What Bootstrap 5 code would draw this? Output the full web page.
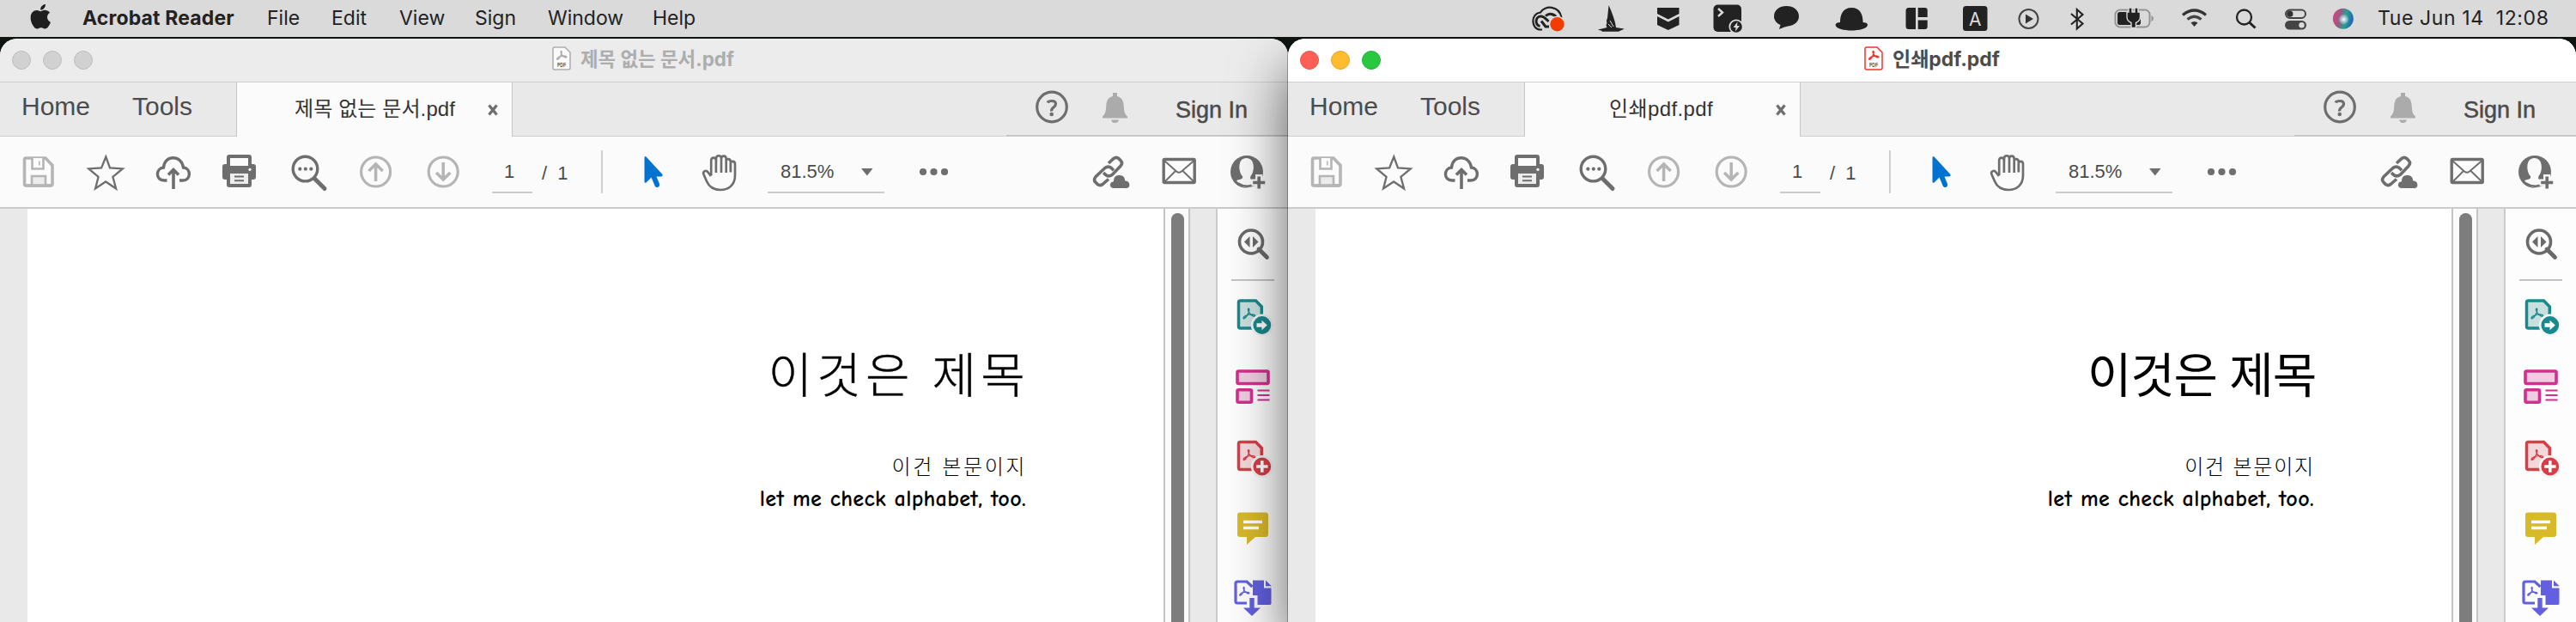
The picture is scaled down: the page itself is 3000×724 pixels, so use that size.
<!DOCTYPE html>
<html lang="ko">
<head>
<meta charset="utf-8">
<title>Acrobat Reader</title>
<meta name="viewport" content="width=device-width, initial-scale=1">
<link href="https://cdn.jsdelivr.net/npm/bootstrap@5.3.0/dist/css/bootstrap.min.css" rel="stylesheet">
<style>
  body { width: 3000px; height: 724px; overflow: hidden; background: #101512; font-family: "Liberation Sans", "Noto Sans CJK KR", sans-serif; color: #4b4b4b; }
  svg { display: block; flex: none; }
  .nowrap > *, .t { white-space: nowrap; flex: none; }
  .ui { font-family: Inter, "Noto Sans CJK KR", sans-serif; }

  /* menu bar */
  .menubar { height: 43px; background: #dadada; color: #222; font-size: 23px; line-height: 42px; position: relative; z-index: 3; }
  .menubar .app { width: 215px; font-weight: 700; letter-spacing: .15px; }
  .m-file { width: 75px; } .m-edit { width: 79px; } .m-view { width: 88px; } .m-sign { width: 85px; } .m-window { width: 122px; }
  .clock { width: 231px; white-space: pre; letter-spacing: .6px; }
  .menubar svg { height: 43px; }

  /* windows */
  .desk { padding-top: 2px; height: 681px; }
  .win { width: 1500px; height: 679px; border-radius: 20px 20px 0 0; overflow: hidden; background: #fff; flex: none; }
  .front { position: relative; z-index: 2; box-shadow: 0 0 0 1px rgba(0,0,0,.28), 0 34px 66px rgba(0,0,0,.62); }
  .titlebar { height: 51px; background: #ececec; border-bottom: 1.5px solid #cfcfcf; color: #adadad; font-size: 22.4px; font-weight: 700; line-height: 48px; }
  .front .titlebar { background: #fff; color: #4c4c4c; font-size: 23px; }
  .titlebar span { position: relative; top: -1px; }
  .lights { width: 643px; padding-left: 14px; gap: 14px; }
  .front .lights { width: 671px; }
  .light { width: 22px; height: 22px; border-radius: 50%; background: #d1d1d1; border: 1px solid #bebebe; }
  .front .l-red { background: #ff5f57; border-color: #e9534c; }
  .front .l-yellow { background: #febc2e; border-color: #e5a72a; }
  .front .l-green { background: #28c840; border-color: #22b238; }
  .pdficon { width: 22px; height: 28px; margin-right: 11px; margin-top: -4px; color: #adadad; }
  .front .pdficon { color: #f2332d; }

  .tabs { height: 63px; background: #e9e9e9; }
  .tabs > .cell { border-bottom: 1.5px solid #cfcfcf; }
  .nav-left { width: 275px; padding-left: 25px; font-size: 30px; line-height: 55px; }
  .nav-home { width: 129px; }
  .doc-tab { width: 322px; background: #fbfbfb; border: solid #c8c8c8; border-width: 0 1px; color: #333; font-size: 24px; line-height: 61px; padding-left: 67px; }
  .front .doc-tab { padding-left: 98px; }
  .doc-tab .name { width: 224px; letter-spacing: .1px; }
  .front .doc-tab .name { width: 193px; letter-spacing: .4px; }
  .nav-right { width: 328px; }
  .tabs > .nav-right { border-bottom: 2px solid #c6c6c6; }
  .signin { font-size: 27px; line-height: 65px; padding-left: 1px; -webkit-text-stroke: .5px; }

  .tools { height: 84px; background: #fbfbfb; border-bottom: 2px solid #cbcbcb; font-size: 22px; line-height: 83px; }
  .tools svg { height: 82px; }
  .pageno { width: 47px; height: 66px; border-bottom: 2px solid #cbcbcb; text-align: center; padding-right: 7px; line-height: 82px; }
  .pagecount { width: 80px; padding-left: 11px; word-spacing: 6px; line-height: 85px; }
  .zoom { width: 136px; height: 66px; border-bottom: 2px solid #cbcbcb; padding-left: 15px; line-height: 82px; }

  /* document */
  .docview { height: 481px; }
  .gutter { width: 32px; background: #e9e9e9; }
  .paper { width: 1323px; background: #fff; color: #000; padding-right: 160px; }
  .track { width: 31px; background: #fbfbfb; border: solid #c3c3c3; border-width: 0 2px; padding: 5px 0 0 7px; }
  .thumb { width: 15px; height: 490px; border-radius: 8px; background: #7d7d7d; }
  .side-gap { width: 32px; background: #e9e9e9; border-right: 2px solid #cbcbcb; }
  .rail { width: 82px; background: #fdfdfd; }
  .doc-title { font: 300 56px/60px "Noto Sans CJK KR", sans-serif; margin: 160px -4px 0 0; letter-spacing: 5.2px; -webkit-text-stroke: .4px; }
  .front .doc-title { font-weight: 400; letter-spacing: -1.2px; margin-right: -2px; -webkit-text-stroke: 0; }
  .doc-body { font: 300 24px/30px "Noto Sans CJK KR", sans-serif; margin-top: 64px; margin-right: -1px; letter-spacing: 2.6px; }
  .front .doc-body { letter-spacing: 1.8px; }
  .doc-en { font: 700 26px/30px "Comic Neue", "Comic Sans MS", "Noto Sans", sans-serif; margin-top: 9px; letter-spacing: .35px; }
</style>
</head>
<body>

<svg width="0" height="0" class="position-absolute" aria-hidden="true">
  <defs>
    <path id="acro" d="M3 17c-2-1 1-4 5-5 3-.8 7-1 9 0 2 1 0 2.500-2 1.500-3-1.500-6-5-6.500-8.500-.3-2 1.600-2 1.500 0C9.800 9 6.500 16 3 17z" fill="none" stroke="currentColor"/>

    <symbol id="i-pdf" viewBox="0 0 22 28">
      <path d="M3 1h12l6 6v18q0 2-2 2H3q-2 0-2-2V3q0-2 2-2z" fill="#fff" fill-opacity=".75" stroke="currentColor" stroke-width="1.500"/>
      <use href="#acro" transform="translate(4 3) scale(.72)" stroke-width="2"/>
      <text x="6" y="24" font-size="6.500" font-weight="700" textLength="10" lengthAdjust="spacingAndGlyphs" fill="#555" font-family="Liberation Sans">PDF</text>
    </symbol>

    <symbol id="i-help" viewBox="1173 96 90 61">
      <circle cx="1226" cy="124.500" r="17.300" fill="none" stroke="#6e6e6e" stroke-width="3.200"/>
      <path d="M1221 119.500q1-2 5-2 4.500 0 4.500 3.600 0 2-2.600 4t-2.300 4.400" fill="none" stroke="#6e6e6e" stroke-width="3.200"/>
      <circle cx="1225.700" cy="133" r="2.300" fill="#6e6e6e"/>
    </symbol>
    <symbol id="i-bell" viewBox="1263 96 106 61">
      <path d="M1297 108h5v4c6 1.500 7.500 6 7.800 12 .3 6 1.200 9 4.200 11.500v2h-29v-2c3-2.500 3.900-5.500 4.200-11.500.3-6 1.800-10.500 7.800-12zM1295 139.500h9q-1 3.500-4.500 3.500t-4.500-3.500z" fill="#ababab"/>
    </symbol>

    <symbol id="i-save" viewBox="0 159 84 82">
      <path d="M30 184h23l8 8.500V214q0 2-2 2H30q-1.500 0-1.500-2v-28q0-2 1.500-2z" fill="none" stroke="#b5b5b5" stroke-width="3.600"/>
      <path d="M37.500 184v12.500h13V184M37 217v-12h16v12" fill="#ececec" stroke="#b5b5b5" stroke-width="2.600"/><path d="M39 184h10v11H39z" fill="#fbfbfb"/><path d="M45.800 187.500v5" stroke="#b5b5b5" stroke-width="1.600"/>
      <path d="M30 216h30" stroke="#b5b5b5" stroke-width="3.400"/>
    </symbol>
    <symbol id="i-star" viewBox="84 159 80 82">
      <path d="M123.300 182.500l4.700 13 14.800.9-11.400 9.400 3.700 13.700-12-8-12 8 3.500-13.700-11.300-9.400 14.800-.9z" fill="none" stroke="#6e6e6e" stroke-width="2.300"/>
    </symbol>
    <symbol id="i-cloud" viewBox="164 159 78 82">
      <path d="M194.500 210h-3.500c-10 0-10-14-.5-15 1-15 21-15 23 0 9.500 1 9 15-.5 15h-4" fill="none" stroke="#6e6e6e" stroke-width="3.400"/>
      <path d="M202 220v-21M196 203.500l6-6 6 6" fill="none" stroke="#6e6e6e" stroke-width="3.600"/>
    </symbol>
    <symbol id="i-print" viewBox="242 159 78 82">
      <path d="M267 180h23q3 0 3 3v8h2q3 0 3 3v12q0 3-3 3h-2v6q0 3-3 3h-23q-3 0-3-3v-6h-2q-3 0-3-3v-12q0-3 3-3h2v-8q0-3 3-3z" fill="#6e6e6e"/>
      <path d="M268 184h21v9h-21z" fill="#fbfbfb"/><path d="M268 202h21v12h-21z" fill="#ededed"/>
      <path d="M273 205.500h11m-11 4.800h11" stroke="#6e6e6e" stroke-width="2"/><circle cx="291" cy="197.300" r="1.600" fill="#fff"/>
    </symbol>
    <symbol id="i-find" viewBox="320 159 78 82">
      <path d="M366 207.500l12 12" stroke="#6e6e6e" stroke-width="5" stroke-linecap="round"/>
      <circle cx="355.500" cy="196.600" r="14.300" fill="#fbfbfb" stroke="#6e6e6e" stroke-width="3.400"/>
      <g fill="#6e6e6e"><circle cx="349.300" cy="196.700" r="2.100"/><circle cx="355.800" cy="196.700" r="2.100"/><circle cx="362.300" cy="196.700" r="2.100"/></g>
    </symbol>
    <symbol id="i-up" viewBox="398 159 79 82">
      <g fill="none" stroke="#b5b5b5" stroke-width="3.200"><circle cx="437.600" cy="200" r="17"/><path d="M437.600 211v-20M429.500 199l8.100-8 8.100 8" stroke-width="3.500"/></g>
    </symbol>
    <symbol id="i-down" viewBox="477 159 96 82">
      <g fill="none" stroke="#b5b5b5" stroke-width="3.200"><circle cx="516.200" cy="200" r="17"/><path d="M516.200 189v20M508.100 201l8.100 8 8.100-8" stroke-width="3.500"/></g>
    </symbol>
    <symbol id="i-arrow" viewBox="700 159 94 82">
      <path d="M701 175v50" stroke="#cbcbcb" stroke-width="1.800"/>
      <path d="M750.500 184.500q0-4 2.500-1.500l18 19.500q2 3-2 3h-4.500l3.500 8.500q.7 3-2 4-2.500.7-3.500-2l-4-9.500-6 6q-2 1-2-1z" fill="#0073d1"/>
    </symbol>
    <symbol id="i-hand" viewBox="794 159 100 82">
      <path d="M828 205l-3.500-4.500c-2-3-6.500-1.500-5 2.500l3.500 8c3 7 8 10 16 10 10 0 17-6 17-17v-13c0-4-5-4-5.200-.5v8.500M828.200 204v-17c0-4.500 5.700-4.500 5.700 0v14M834 189v-4c0-5 6-5 6 0v16M840 185c0-4.500 5.700-4.500 5.700 0v16M845.700 188c0-4.500 5.200-3.500 5.200.5v12" fill="none" stroke="#6e6e6e" stroke-width="2.700"/>
    </symbol>
    <symbol id="i-more" viewBox="1030 159 221 82"><g fill="#6e6e6e"><circle cx="1075" cy="200" r="4.100"/><circle cx="1087.500" cy="200" r="4.100"/><circle cx="1100" cy="200" r="4.100"/></g></symbol>
    <symbol id="i-link" viewBox="1251 159 84 82">
      <g fill="none" stroke="#6e6e6e" stroke-width="3.600">
        <path d="M1291 190l6-5.500q3-2.300 6 .2l2 2q3 3 0 6.500l-9.500 10q-4 3-7.500.5l-3-2.500"/>
        <path d="M1291 208.500l-7 6q-3 2.300-6-.2l-2-2q-3-3 0-6.500l10.500-10q4-3 7.500-.5l3 3"/>
      </g>
      <path d="M1297 219.500c-6 0-6-8-.5-8.500 0-5 3-7.500 7-7.500 4.500 0 7 3 7 6.500 7 .5 7 9.500 1 9.500z" fill="#6e6e6e" stroke="#fbfbfb" stroke-width="1"/>
    </symbol>
    <symbol id="i-mail" viewBox="1335 159 78 82">
      <rect x="1355.200" y="185.500" width="36" height="27" rx="1" fill="#fdfdfd" stroke="#6e6e6e" stroke-width="3.400"/>
      <path d="M1356 187l14 12.500q3 2.500 6 0l14.500-12.500M1356 212l13-13M1391 212l-13.500-13" fill="none" stroke="#6e6e6e" stroke-width="1.900"/>
    </symbol>
    <symbol id="i-person" viewBox="1413 159 87 82">
      <circle cx="1452" cy="200" r="19" fill="#6e6e6e"/>
      <path d="M1440 210c5-1.500 8-1.500 7-5-5-5-6-21 4.500-21s10 16 5 21c-1 3.500 0 4 5 5.500l3 6-5 2.500q-10 .5-15.500-3.500z" fill="#fafafa"/>
      <path d="M1441 213q10 6.500 21 1.500" fill="none" stroke="#6e6e6e" stroke-width="2.500"/>
      <path d="M1466 203v18M1457.500 212.500h17" stroke="#f6f6f6" stroke-width="8"/>
      <path d="M1466.200 205.500v14M1459.200 212.500h14" stroke="#6e6e6e" stroke-width="3.600"/>
    </symbol>

    <symbol id="i-rail" viewBox="1418 243 82 481">
      <path d="M1466 290l9.500 9.500" stroke="#6a6a6a" stroke-width="4.800" stroke-linecap="round"/>
      <circle cx="1457" cy="281.500" r="13.500" fill="none" stroke="#6a6a6a" stroke-width="3.600"/>
      <path d="M1455.500 275v13l-6.500-6.500zM1459 275v13l6.500-6.500z" fill="#6a6a6a"/>
      <path d="M1434 326h50" stroke="#c4c4c4" stroke-width="2"/>
      <g color="#18898c">
        <path d="M1444.500 350h18l6.800 7v25h-24.800q-2 0-2-2v-28q0-2 2-2z" fill="#c9dfde" stroke="#18898c" stroke-width="3.500"/>
        <use href="#acro" transform="translate(1446 356) scale(.88)" stroke-width="1.600"/>
        <circle cx="1469.800" cy="378.500" r="11.700" fill="#18898c" stroke="#f4f4f4" stroke-width="2.600"/>
        <path d="M1463.500 376.300h6v-3.600l6.300 5.800-6.300 5.800v-3.600h-6z" fill="#fff"/>
      </g>
      <g fill="#efcde0" stroke="#d42f8e" stroke-width="3.600"><rect x="1441" y="432" width="36" height="14.500" rx="1.500"/><rect x="1441" y="453.700" width="16.500" height="14.500" rx="1.500"/></g>
      <path d="M1464.500 454.500h14m-14 5.500h14m-14 5.500h14" stroke="#d42f8e" stroke-width="2"/>
      <g color="#d93d48">
        <path d="M1444.500 514.500h18l6.800 7v25h-24.800q-2 0-2-2v-28q0-2 2-2z" fill="#f3d8da" stroke="#d93d48" stroke-width="3.500"/>
        <use href="#acro" transform="translate(1446 520.500) scale(.88)" stroke-width="1.600"/>
        <circle cx="1469.800" cy="543" r="11.700" fill="#d93d48" stroke="#f4f4f4" stroke-width="2.600"/>
        <path d="M1463 543h13.600m-6.800-6.800v13.600" stroke="#fff" stroke-width="3.600"/>
      </g>
      <path d="M1444 596.500h30q3 0 3 3v22.500q0 3-3 3h-12l-10 9v-9h-8q-3 0-3-3v-22.500q0-3 3-3z" fill="#d8b92a"/>
      <path d="M1448 607.500h22M1448 614.500h18" stroke="#fff" stroke-width="3.400"/>
      <g color="#6260e0">
        <path d="M1459 675.500h13v9h8.500v18q0 1.500-2 1.500h-14v-11h-5.500z" fill="#6260e0"/><path d="M1474 675.500l6.800 6.800h-6.800z" fill="#6260e0"/>
        <path d="M1452 702h-11q-2 0-2-2v-21q0-2 2-2h11l6.500 6" fill="none" stroke="#6260e0" stroke-width="3.200"/>
        <use href="#acro" transform="translate(1442 681) scale(.72)" stroke-width="1.800"/>
        <path d="M1455.300 696h5.400v11.500h7.300l-10 9.500-10-9.500h7.300z" fill="#6260e0"/>
      </g>
    </symbol>
  </defs>
</svg>

<header class="menubar ui d-flex nowrap">
  <svg width="96" viewBox="0 0 96 43"><path transform="translate(33 5) scale(1.780)" fill="#1f1f1f" d="M11.182.008C11.148-.03 9.923.023 8.857 1.180c-1.066 1.156-.902 2.482-.878 2.516s1.520.087 2.475-1.258.762-2.391.728-2.430m3.314 11.733c-.048-.096-2.325-1.234-2.113-3.422s1.675-2.789 1.698-2.854-.597-.79-1.254-1.157a3.700 3.700 0 0 0-1.563-.434c-.108-.003-.483-.095-1.254.116-.508.139-1.653.589-1.968.607-.316.018-1.256-.522-2.267-.665-.647-.125-1.333.131-1.824.328-.49.196-1.422.754-2.074 2.237-.652 1.482-.311 3.830-.067 4.560s.625 1.924 1.273 2.796c.576.984 1.340 1.667 1.659 1.899s1.219.386 1.843.067c.502-.308 1.408-.485 1.766-.472.357.013 1.061.154 1.782.539.571.197 1.111.115 1.652-.105.541-.221 1.324-1.059 2.238-2.758q.52-1.185.473-1.282"/></svg>
  <span class="app">Acrobat Reader</span>
  <span class="m-file">File</span>
  <span class="m-edit">Edit</span>
  <span class="m-view">View</span>
  <span class="m-sign">Sign</span>
  <span class="m-window">Window</span>
  <span>Help</span>
  <svg class="ms-auto" width="1000" viewBox="1769 0 1000 43">
    <!-- creative cloud -->
    <path d="M1796 34.500h-2c-11 0-12-19 0-20 5-9 22-8 24.500 6" fill="none" stroke="#222" stroke-width="2.200"/>
    <path d="M1800 18.500c5-4.500 12-1.500 13.500 4M1793.500 30.500c-6-1-6-11 .5-11.500 4-.3 6.500 3 9.500 6M1795 24.500l5 6.500h4" fill="none" stroke="#222" stroke-width="3"/>
    <circle cx="1813.500" cy="28.300" r="9" fill="#f23c02" stroke="#dadada" stroke-width="1.600"/>
    <!-- sailboat -->
    <path d="M1873.500 6c4 9 7.500 18 8.500 26l9.500 1.500c-2 1.500-5 2-6.500 3.300h-19c-1-1.800-4-1.300-5-2.300l10.500-2.500c-1.500-2-1-4 0-5-1-2-.5-4 .5-6z" fill="#222"/><path d="M1875 24l4 7m-6-3l4 4" stroke="#dadada" stroke-width="1"/>
    <!-- chevrons -->
    <path d="M1930 9h25.500v7l-12.700 6.500-12.800-6.500zM1930 19l12.800 6.500 12.700-6.500v10l-12.700 6-12.800-6z" fill="#222"/>
    <!-- terminal -->
    <rect x="1995.500" y="5.500" width="32.500" height="31.500" rx="5" fill="#222"/><path d="M2001 10l5 4.500-5 4.500" fill="none" stroke="#dadada" stroke-width="2.400"/>
    <circle cx="2022" cy="31" r="7.700" fill="#222" stroke="#dadada" stroke-width="1.800"/><path d="M2023.500 25.500l-5 6.500h3l-.5 4.500 5-6.500h-3z" fill="#dadada"/>
    <!-- chat -->
    <path d="M2080.500 7c8 0 14.500 4.500 14.500 12 0 6-5 10.500-13 11.500q-4 .5-10 3.500l1.500-5c-4.500-2-7.500-5.500-7.500-10 0-7.500 6.500-12 14.500-12z" fill="#222"/>
    <!-- hat -->
    <path d="M2143 26c0-9 3-17 13.300-17s13.300 8 13.300 17c3 .3 5.400 1 5.400 3 0 4.500-11 6.500-18.700 6.500s-18.700-2-18.700-6.500c0-2 2.400-2.700 5.400-3z" fill="#222"/>
    <!-- panes -->
    <path d="M2223 9h8v25h-8q-3.500 0-3.500-3.500v-18q0-3.500 3.500-3.500zM2233.700 9h8q3 0 3 3v8h-11zM2233.700 23.500h11V31q0 3-3 3h-8z" fill="#222"/>
    <!-- input source -->
    <rect x="2286" y="7" width="28.500" height="29" rx="3.500" fill="#222"/><text x="2293" y="29.500" font-size="22" font-family="Inter" fill="#dadada" textLength="14.500" lengthAdjust="spacingAndGlyphs">A</text>
    <!-- play -->
    <circle cx="2362.500" cy="22" r="11" fill="none" stroke="#444" stroke-width="2"/><path d="M2359 16.500v11l9-5.500z" fill="#333"/>
    <!-- bluetooth -->
    <path d="M2412 16l13.500 11.500-6.700 6v-22.500l6.700 6L2412 28.500" fill="none" stroke="#222" stroke-width="2.100"/>
    <!-- battery -->
    <rect x="2463.500" y="11.500" width="40" height="20" rx="5.500" fill="none" stroke="#949494" stroke-width="2"/><path d="M2505.500 18q2.500 1 2.500 3.500t-2.500 3.500z" fill="#949494"/><rect x="2466" y="14" width="27" height="15" rx="2.500" fill="#222"/>
    <path d="M2479 9h4v5h3v-5h4v5h2.500v5.500q0 5-5 7v6h-5.500v-6q-5-2-5-7V14h2z" fill="#222" stroke="#dadada" stroke-width="1.400"/>
    <!-- wifi -->
    <g fill="none" stroke="#444" stroke-width="3.200"><path d="M2542 17.500q13.500-11 27 0" stroke="#333"/><path d="M2547.500 22.500q8-6.500 16 0"/></g><path d="M2551.500 26.500q4-3 8 0l-4 4.500z" fill="#333"/>
    <!-- search -->
    <circle cx="2613.500" cy="20" r="8.500" fill="none" stroke="#222" stroke-width="2.300"/><path d="M2619.500 26l7 6.500" stroke="#222" stroke-width="3"/>
    <!-- control centre -->
    <rect x="2662" y="11.500" width="23" height="9.500" rx="4.800" fill="none" stroke="#444" stroke-width="2"/><circle cx="2666.800" cy="16.200" r="3.600" fill="#333"/><rect x="2661" y="24" width="25" height="10.500" rx="5.200" fill="#444"/><circle cx="2680.500" cy="29.200" r="3.200" fill="#dadada"/>
    <!-- siri -->
    <defs>
      <linearGradient id="siri" x1="0" y1=".4" x2="1" y2=".6"><stop offset="0" stop-color="#e0407c"/><stop offset=".35" stop-color="#8d5f86"/><stop offset=".6" stop-color="#2a9f8c"/><stop offset="1" stop-color="#1a62c4"/></linearGradient>
      <radialGradient id="glow"><stop offset="0" stop-color="#fff"/><stop offset=".35" stop-color="#e8f5ff" stop-opacity=".7"/><stop offset="1" stop-color="#fff" stop-opacity="0"/></radialGradient>
    </defs>
    <circle cx="2728.800" cy="21.800" r="12" fill="url(#siri)"/><circle cx="2729.500" cy="22.500" r="6.500" fill="url(#glow)"/>
  </svg>
  <span class="clock">Tue Jun 14  12:08</span>
</header>

<main class="desk d-flex">
  <section class="win">
    <div class="titlebar ui d-flex align-items-center nowrap">
      <div class="lights d-flex"><i class="light l-red"></i><i class="light l-yellow"></i><i class="light l-green"></i></div>
      <svg class="pdficon"><use href="#i-pdf"/></svg><span>제목 없는 문서.pdf</span>
    </div>
    <nav class="tabs d-flex nowrap">
      <div class="cell nav-left d-flex"><span class="nav-home">Home</span><span>Tools</span></div>
      <div class="doc-tab d-flex"><span class="name t">제목 없는 문서.pdf</span><svg width="14" height="61" viewBox="567 96 14 61"><path d="M569.500 122.500l9 11m0-11l-9 11" stroke="#6e6e6e" stroke-width="3.300"/></svg></div>
      <div class="cell flex-fill"></div>
      <div class="cell nav-right d-flex"><svg width="90" height="61"><use href="#i-help"/></svg><svg width="106" height="61"><use href="#i-bell"/></svg><span class="signin">Sign In</span></div>
    </nav>
    <div class="tools d-flex nowrap">
      <svg width="84"><use href="#i-save"/></svg><svg width="80"><use href="#i-star"/></svg><svg width="78"><use href="#i-cloud"/></svg><svg width="78"><use href="#i-print"/></svg><svg width="78"><use href="#i-find"/></svg><svg width="79"><use href="#i-up"/></svg><svg width="96"><use href="#i-down"/></svg>
      <span class="pageno">1</span><span class="pagecount">/ 1</span>
      <svg width="94"><use href="#i-arrow"/></svg><svg width="100"><use href="#i-hand"/></svg>
      <div class="zoom d-flex justify-content-between"><span>81.5%</span><svg width="28" viewBox="1002 159 28 82"><path d="M1003 196h13.500l-6.700 8.500z" fill="#6e6e6e"/></svg></div>
      <svg width="221"><use href="#i-more"/></svg><svg width="84"><use href="#i-link"/></svg><svg width="78"><use href="#i-mail"/></svg><svg width="87"><use href="#i-person"/></svg>
    </div>
    <div class="docview d-flex nowrap">
      <div class="gutter"></div>
      <article class="paper d-flex flex-column align-items-end">
        <div class="doc-title">이것은 제목</div>
        <div class="doc-body">이건 본문이지</div>
        <div class="doc-en">let me check alphabet, too.</div>
      </article>
      <div class="track"><div class="thumb"></div></div>
      <div class="side-gap"></div>
      <aside class="rail"><svg width="82" height="481"><use href="#i-rail"/></svg></aside>
    </div>
  </section>

  <section class="win front">
    <div class="titlebar ui d-flex align-items-center nowrap">
      <div class="lights d-flex"><i class="light l-red"></i><i class="light l-yellow"></i><i class="light l-green"></i></div>
      <svg class="pdficon"><use href="#i-pdf"/></svg><span>인쇄pdf.pdf</span>
    </div>
    <nav class="tabs d-flex nowrap">
      <div class="cell nav-left d-flex"><span class="nav-home">Home</span><span>Tools</span></div>
      <div class="doc-tab d-flex"><span class="name t">인쇄pdf.pdf</span><svg width="14" height="61" viewBox="567 96 14 61"><path d="M569.500 122.500l9 11m0-11l-9 11" stroke="#6e6e6e" stroke-width="3.300"/></svg></div>
      <div class="cell flex-fill"></div>
      <div class="cell nav-right d-flex"><svg width="90" height="61"><use href="#i-help"/></svg><svg width="106" height="61"><use href="#i-bell"/></svg><span class="signin">Sign In</span></div>
    </nav>
    <div class="tools d-flex nowrap">
      <svg width="84"><use href="#i-save"/></svg><svg width="80"><use href="#i-star"/></svg><svg width="78"><use href="#i-cloud"/></svg><svg width="78"><use href="#i-print"/></svg><svg width="78"><use href="#i-find"/></svg><svg width="79"><use href="#i-up"/></svg><svg width="96"><use href="#i-down"/></svg>
      <span class="pageno">1</span><span class="pagecount">/ 1</span>
      <svg width="94"><use href="#i-arrow"/></svg><svg width="100"><use href="#i-hand"/></svg>
      <div class="zoom d-flex justify-content-between"><span>81.5%</span><svg width="28" viewBox="1002 159 28 82"><path d="M1003 196h13.500l-6.700 8.500z" fill="#6e6e6e"/></svg></div>
      <svg width="221"><use href="#i-more"/></svg><svg width="84"><use href="#i-link"/></svg><svg width="78"><use href="#i-mail"/></svg><svg width="87"><use href="#i-person"/></svg>
    </div>
    <div class="docview d-flex nowrap">
      <div class="gutter"></div>
      <article class="paper d-flex flex-column align-items-end">
        <div class="doc-title">이것은 제목</div>
        <div class="doc-body">이건 본문이지</div>
        <div class="doc-en">let me check alphabet, too.</div>
      </article>
      <div class="track"><div class="thumb"></div></div>
      <div class="side-gap"></div>
      <aside class="rail"><svg width="82" height="481"><use href="#i-rail"/></svg></aside>
    </div>
  </section>
</main>
<script src="https://cdn.jsdelivr.net/npm/bootstrap@5.3.0/dist/js/bootstrap.bundle.min.js"></script>
</body>
</html>
